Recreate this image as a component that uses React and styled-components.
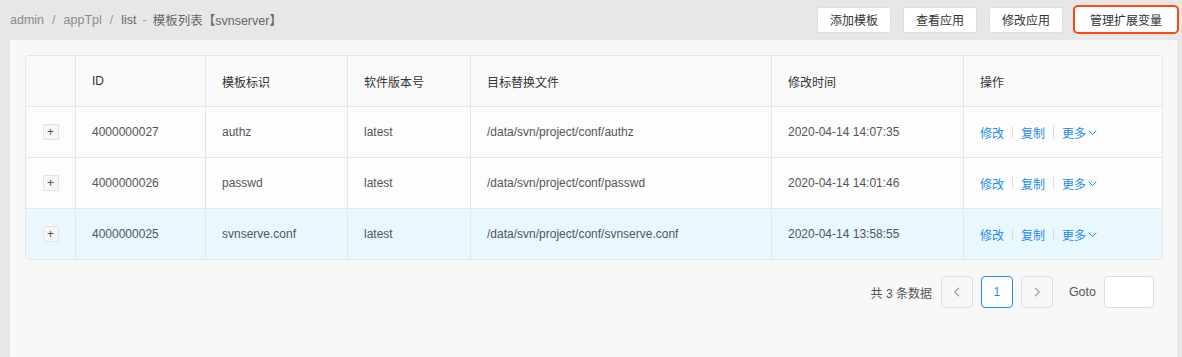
import React from "react";
import styled, { createGlobalStyle } from "styled-components";

const Global = createGlobalStyle`
  html, body { margin: 0; padding: 0; background: #e7e7e7; }
  body { font-family: "Liberation Sans", "Noto Sans CJK SC", sans-serif; font-size: 12px; color: #555; }
  * { box-sizing: border-box; }
`;

const Page = styled.div`
  width: 1182px;
  height: 357px;
  background: #e7e7e7;
  display: flex;
  flex-direction: column;
`;

const TopBar = styled.div`
  height: 40px;
  display: flex;
  align-items: center;
  justify-content: space-between;
  padding: 0 3px 1px 10px;
`;

const Crumbs = styled.div`
  display: flex;
  align-items: center;
  font-size: 12.5px;
  color: #8a8a8a;
`;

const Sep = styled.span`
  padding: 0 ${(p) => (p.$tight ? "6px" : "8px")};
  color: #9a9a9a;
`;

const Crumb = styled.span`
  color: ${(p) => (p.$last ? "#666" : "#8a8a8a")};
`;

const Actions = styled.div`
  display: flex;
  align-items: center;
  gap: 12px;
`;

const Btn = styled.button`
  height: ${(p) => (p.$marked ? "29px" : "26px")};
  padding: 0 ${(p) => (p.$marked ? "15px" : "12px")};
  background: #fff;
  border: ${(p) => (p.$marked ? "2px solid #fb4a0c" : "1px solid #dedede")};
  border-radius: ${(p) => (p.$marked ? "5px" : "2px")};
  font-family: inherit;
  font-size: 12px;
  color: #333;
  cursor: pointer;
  ${(p) => p.$marked && "margin-left: -2px;"}
`;

const Panel = styled.div`
  margin: 0 5px 0 10px;
  flex: 1;
  background: #f8f8f8;
  padding: 15px 16px 0 15px;
`;

const Table = styled.table`
  width: 1136px;
  border-collapse: separate;
  border-spacing: 0;
  table-layout: fixed;
  border: 1px solid #e6e6e6;
  border-radius: 4px;
  overflow: hidden;
  background: #fdfdfd;
`;

const Th = styled.th`
  height: 50px;
  text-align: left;
  font-weight: normal;
  color: #333;
  padding: 0 16px;
  background: #fafafa;
  border-left: ${(p) => (p.$first ? "none" : "1px solid #e6e6e6")};
`;

const Tr = styled.tr`
  background: ${(p) => (p.$active ? "#e9f7fe" : "#fdfdfd")};
`;

const Td = styled.td`
  height: 51px;
  padding: 0 16px;
  color: #555;
  border-top: 1px solid #e6e6e6;
  border-left: ${(p) => (p.$first ? "none" : "1px solid #e6e6e6")};
  text-align: ${(p) => (p.$center ? "center" : "left")};
  white-space: nowrap;
`;

const Expand = styled.span`
  display: inline-flex;
  align-items: center;
  justify-content: center;
  width: 16px;
  height: 16px;
  border: 1px solid #e2e2e2;
  background: #f6f6f6;
  color: #555;
  font-size: 12px;
  line-height: 1;
  border-radius: 1px;
`;

const Ops = styled.div`
  display: flex;
  align-items: center;
  color: #1d8cf0;
`;

const Link = styled.a`
  color: #1d8cf0;
  display: inline-flex;
  align-items: center;
  gap: 2px;
  cursor: pointer;
`;

const Divider = styled.span`
  width: 1px;
  height: 12px;
  background: #dcdcdc;
  margin: 0 8px;
`;

const Pager = styled.div`
  display: flex;
  align-items: center;
  justify-content: flex-end;
  padding: 16px 7px 0 0;
  gap: 8px;
`;

const Total = styled.span`
  color: #555;
  margin-right: 1px;
`;

const PageBtn = styled.div`
  width: 32px;
  height: 32px;
  border: 1px solid ${(p) => (p.$active ? "#1d8cf0" : "#dedede")};
  border-radius: 4px;
  display: flex;
  align-items: center;
  justify-content: center;
  color: ${(p) => (p.$active ? "#1d8cf0" : "#999")};
  background: ${(p) => (p.$active ? "#fff" : "#f8f8f8")};
  font-size: 12px;
`;

const Goto = styled.span`
  margin-left: 8px;
  color: #555;
  font-size: 12.5px;
`;

const GotoInput = styled.input`
  width: 50px;
  height: 32px;
  border: 1px solid #dedede;
  border-radius: 4px;
  background: #fff;
  outline: none;
`;

const Chevron = ({ dir = "down", size = 9 }) => {
  const paths = {
    down: "M1 3 L4.5 6.5 L8 3",
    left: "M6 1 L2.5 4.5 L6 8",
    right: "M3 1 L6.5 4.5 L3 8",
  };
  return (
    <svg width={size} height={size} viewBox="0 0 9 9" fill="none">
      <path d={paths[dir]} stroke="currentColor" strokeWidth="1" strokeLinecap="round" strokeLinejoin="round" />
    </svg>
  );
};

const rows = [
  { id: "4000000027", tag: "authz", ver: "latest", file: "/data/svn/project/conf/authz", time: "2020-04-14 14:07:35" },
  { id: "4000000026", tag: "passwd", ver: "latest", file: "/data/svn/project/conf/passwd", time: "2020-04-14 14:01:46" },
  { id: "4000000025", tag: "svnserve.conf", ver: "latest", file: "/data/svn/project/conf/svnserve.conf", time: "2020-04-14 13:58:55", active: true },
];

const widths = [49, 130, 142, 123, 301, 192, 199];
const heads = ["", "ID", "模板标识", "软件版本号", "目标替换文件", "修改时间", "操作"];

export default function App() {
  return (
    <Page>
      <Global />
      <TopBar>
        <Crumbs>
          <Crumb>admin</Crumb>
          <Sep>/</Sep>
          <Crumb>appTpl</Crumb>
          <Sep>/</Sep>
          <Crumb $last>list</Crumb>
          <Sep $tight>-</Sep>
          <Crumb $last>模板列表【svnserver】</Crumb>
        </Crumbs>
        <Actions>
          <Btn>添加模板</Btn>
          <Btn>查看应用</Btn>
          <Btn>修改应用</Btn>
          <Btn $marked>管理扩展变量</Btn>
        </Actions>
      </TopBar>
      <Panel>
        <Table>
          <colgroup>
            {widths.map((w, i) => (
              <col key={i} style={{ width: w }} />
            ))}
          </colgroup>
          <thead>
            <tr>
              {heads.map((h, i) => (
                <Th key={i} $first={i === 0}>{h}</Th>
              ))}
            </tr>
          </thead>
          <tbody>
            {rows.map((r) => (
              <Tr key={r.id} $active={r.active}>
                <Td $first $center>
                  <Expand>+</Expand>
                </Td>
                <Td>{r.id}</Td>
                <Td>{r.tag}</Td>
                <Td>{r.ver}</Td>
                <Td>{r.file}</Td>
                <Td>{r.time}</Td>
                <Td>
                  <Ops>
                    <Link>修改</Link>
                    <Divider />
                    <Link>复制</Link>
                    <Divider />
                    <Link>
                      更多
                      <Chevron dir="down" />
                    </Link>
                  </Ops>
                </Td>
              </Tr>
            ))}
          </tbody>
        </Table>
        <Pager>
          <Total>共 3 条数据</Total>
          <PageBtn>
            <Chevron dir="left" size={10} />
          </PageBtn>
          <PageBtn $active>1</PageBtn>
          <PageBtn>
            <Chevron dir="right" size={10} />
          </PageBtn>
          <Goto>Goto</Goto>
          <GotoInput />
        </Pager>
      </Panel>
    </Page>
  );
}
